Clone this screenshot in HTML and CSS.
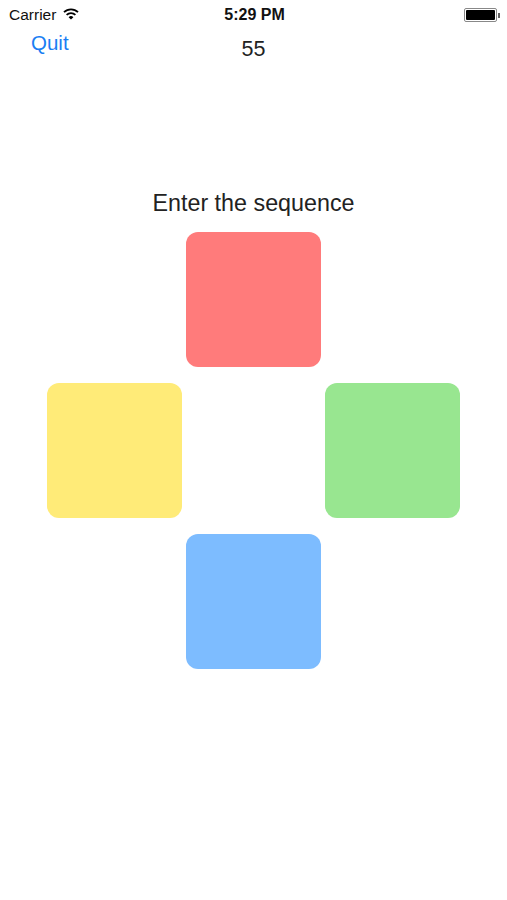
FILE: index.html
```html
<!DOCTYPE html>
<html>
<head>
<meta charset="utf-8">
<link rel="stylesheet" href="styles.css">
</head>
<body>
<div class="status">
  <div class="status-left">
    <span class="carrier">Carrier</span>
    <svg class="wifi" width="16" height="12" viewBox="0 0 16 12">
      <path d="M1 4.2 A10 10 0 0 1 15 4.2" fill="none" stroke="#000" stroke-width="1.8"/>
      <path d="M3.6 6.8 A6.4 6.4 0 0 1 12.4 6.8" fill="none" stroke="#000" stroke-width="1.8"/>
      <path d="M8 11.5 L5.6 9.2 A3.4 3.4 0 0 1 10.4 9.2 Z" fill="#000"/>
    </svg>
  </div>
  <div class="time">5:29 PM</div>
  <div class="status-right">
    <div class="battery"><div class="battery-fill"></div></div>
    <div class="battery-nub"></div>
  </div>
</div>
<div class="nav">
  <span class="quit">Quit</span>
  <span class="score">55</span>
</div>
<div class="prompt">Enter the sequence</div>
<div class="pad">
  <div class="key red"></div>
  <div class="key yellow"></div>
  <div class="key green"></div>
  <div class="key blue"></div>
</div>
</body>
</html>
```
FILE: styles.css
```css
html, body {
  margin: 0;
  padding: 0;
  background: #fff;
}
body {
  width: 507px;
  height: 900px;
  font-family: "Liberation Sans", Arial, sans-serif;
  color: #000;
  position: relative;
}
.status {
  height: 30px;
  display: flex;
  align-items: center;
  justify-content: space-between;
  padding: 0 7px 0 9px;
  position: relative;
}
.status-left {
  display: flex;
  align-items: center;
  gap: 7px;
  width: 120px;
}
.carrier {
  font-size: 15.5px;
  color: #111;
}
.wifi {
  margin-top: -2px;
}
.time {
  font-size: 16px;
  font-weight: bold;
  color: #111;
}
.status-right {
  width: 120px;
  display: flex;
  justify-content: flex-end;
  align-items: center;
}
.battery {
  width: 29px;
  height: 10px;
  border: 1px solid #888;
  border-radius: 2px;
  padding: 1px;
}
.battery-fill {
  width: 100%;
  height: 100%;
  background: #000;
  border-radius: 1px;
}
.battery-nub {
  width: 2px;
  height: 5px;
  background: #666;
  margin-left: 1px;
}
.nav {
  height: 40px;
  display: flex;
  align-items: flex-start;
  position: relative;
}
.quit {
  font-size: 20.5px;
  color: #1a7ef3;
  margin-left: 31px;
  margin-top: 1px;
}
.score {
  position: absolute;
  left: 0;
  right: 0;
  top: 7px;
  text-align: center;
  font-size: 21.5px;
  color: #222;
  pointer-events: none;
}
.prompt {
  margin-top: 120px;
  text-align: center;
  font-size: 23.3px;
  color: #222;
  line-height: 27px;
}
.pad {
  margin-top: 15px;
  display: grid;
  grid-template-columns: 135px 135px 135px;
  grid-template-rows: 135px 135px 135px;
  column-gap: 4px;
  row-gap: 16px;
  justify-content: center;
  grid-template-areas:
    ". r ."
    "y . g"
    ". b .";
}
.key {
  border-radius: 12px;
}
.red { grid-area: r; background: #ff7b7b; }
.yellow { grid-area: y; background: #ffeb78; }
.green { grid-area: g; background: #98e690; }
.blue { grid-area: b; background: #7dbcff; }
```
